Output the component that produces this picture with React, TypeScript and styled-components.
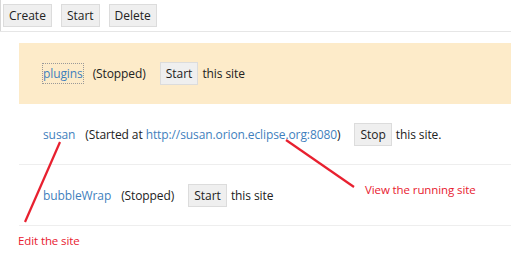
import React from 'react';
import styled, {createGlobalStyle} from 'styled-components';

const GlobalStyle = createGlobalStyle`
  html, body {
    margin: 0;
    padding: 0;
    background: #fff;
  }
  body {
    font-family: "Open Sans", "DejaVu Sans", sans-serif;
    font-size: 12px;
    color: #222;
  }
`;

type Site = {
  name: string;
  running: boolean;
  url?: string;
  highlighted?: boolean;
  focused?: boolean;
};

const sites: Site[] = [
  {name: 'plugins', running: false, highlighted: true, focused: true},
  {name: 'susan', running: true, url: 'http://susan.orion.eclipse.org:8080'},
  {name: 'bubbleWrap', running: false},
];

const App: React.FC = () => (
  <Page>
    <GlobalStyle />
    <Toolbar>
      <Button>Create</Button>
      <Button>Start</Button>
      <Button>Delete</Button>
    </Toolbar>
    <SiteList>
      {sites.map(site => (
        <SiteRow key={site.name} $highlighted={site.highlighted}>
          <SiteName $focused={site.focused}>{site.name}</SiteName>
          {site.running ? (
            <Status>
              (Started at <UrlLink>{site.url}</UrlLink>)
            </Status>
          ) : (
            <Status>(Stopped)</Status>
          )}
          <Button>{site.running ? 'Stop' : 'Start'}</Button>
          <Trailer>{site.running ? 'this site.' : 'this site'}</Trailer>
        </SiteRow>
      ))}
    </SiteList>

    <Callouts width="511" height="269" viewBox="0 0 511 269">
      <line x1="60" y1="142" x2="25" y2="222" stroke="#e8202f" strokeWidth="2.2" />
      <line x1="286" y1="140" x2="354" y2="187" stroke="#e8202f" strokeWidth="2.2" />
    </Callouts>
    <Note $left={18} $top={233}>Edit the site</Note>
    <Note $left={365} $top={182}>View the running site</Note>
  </Page>
);

export default App;

const Page = styled.div`
  position: relative;
  width: 511px;
  height: 269px;
  overflow: hidden;
`;

const Toolbar = styled.div`
  display: flex;
  gap: 9px;
  padding: 4px 0 3px 3px;
  border-bottom: 1px solid #e6e6e6;
  box-shadow: inset 1px 0 0 #d8d8d8;
  height: 24px;
`;

const Button = styled.button`
  font: inherit;
  color: #222;
  height: 23px;
  padding: 0 5px;
  background: #efefef;
  border: 1px solid #dcdcdc;
  border-radius: 0;
  cursor: pointer;
`;

const SiteList = styled.div`
  margin: 11px 0 0 19px;
`;

const SiteRow = styled.div<{$highlighted?: boolean}>`
  display: flex;
  align-items: center;
  height: 60px;
  padding-left: 24px;
  letter-spacing: -0.1px;
  background: ${p => (p.$highlighted ? '#fdebc9' : 'transparent')};
  border-bottom: 1px solid ${p => (p.$highlighted ? '#fdebc9' : '#eeeeee')};

  ${Button} {
    margin-left: 14px;
  }
`;

const SiteName = styled.a<{$focused?: boolean}>`
  color: #3f7fbd;
  text-decoration: none;
  padding: 1px 0;
  outline: ${p => (p.$focused ? '1px dotted #999' : 'none')};
  outline-offset: 0;
`;

const Status = styled.span`
  margin-left: 10px;
  color: #222;
`;

const UrlLink = styled.a`
  color: #3f7fbd;
`;

const Trailer = styled.span`
  margin-left: 4px;
`;

const Callouts = styled.svg`
  position: absolute;
  left: 0;
  top: 0;
  pointer-events: none;
`;

const Note = styled.span<{$left: number; $top: number}>`
  position: absolute;
  left: ${p => p.$left}px;
  top: ${p => p.$top}px;
  color: #e8202f;
  font-size: 11.5px;
  letter-spacing: -0.1px;
`;
